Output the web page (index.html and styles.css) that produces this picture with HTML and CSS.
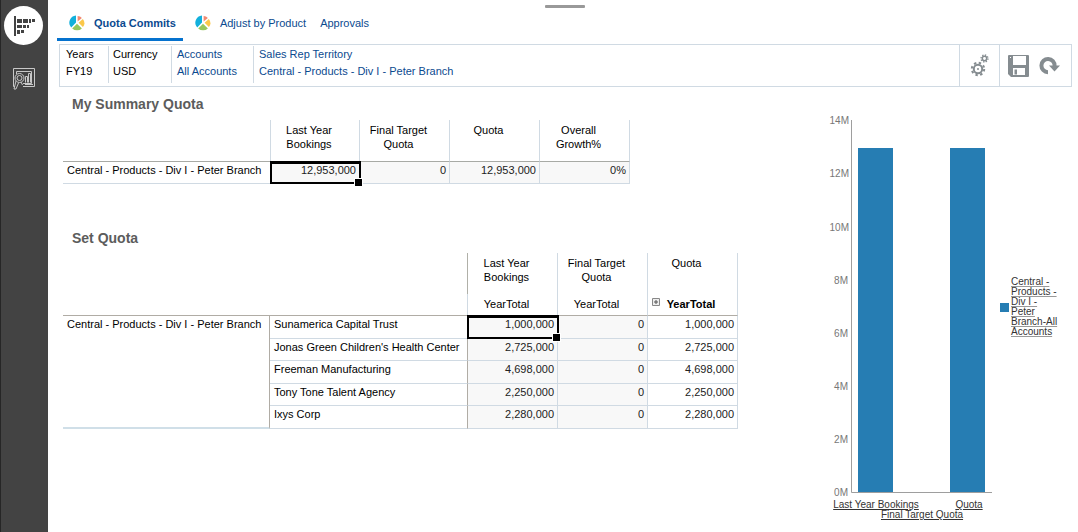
FILE: index.html
```html
<!DOCTYPE html>
<html lang="en">
<head>
<meta charset="utf-8">
<title>Quota Commits</title>
<link rel="stylesheet" href="styles.css">
</head>
<body>
<svg class="defs" width="0" height="0" aria-hidden="true">
  <symbol id="pie" viewBox="0 0 16 16">
    <path d="M7 7.600V.6A7.200 7.200 0 0 0 2.200 12.600z" fill="#12b0dc"/>
    <path d="M8.600 6.600V1a6.500 6.500 0 0 1 4.300 2z" fill="#f28a72"/>
    <path d="M9.600 7.800l4.200-3.700a6.400 6.400 0 0 1 .100 8z" fill="#fbc84a"/>
    <path d="M8 8.800l4.900 4.600a7 7 0 0 1-9.700 0z" fill="#97c75c"/>
  </symbol>
</svg>
<nav class="sidebar" aria-label="Cards">
  <button class="side-button side-active" aria-label="Quota">
    <svg width="24" height="22" viewBox="0 0 24 22" fill="#434343"><path d="M2 1h2v20H2zM5 4h5v4H5zM11 4h5v4h-5zM17 4h2v4h-2zM20 4h3v3h-3zM5 10h5v3H5zM11 10h3v3h-3zM15 10h2v3h-2zM5 15h3v4H5zM9 15h3v3H9z"/></svg>
  </button>
  <button class="side-button" aria-label="Analysis">
    <svg width="24" height="24" viewBox="0 0 24 24" fill="none" stroke="#c8c8c8"><path d="M1.500 20.500v-18h21v18H11M1.500 20.500H3M4.500 8V5.500h15v12H11M15.500 16.500v-6h-2v6M18.500 16.500v-9h-2v9M13 18.500h8"/><circle cx="7.500" cy="12" r="4.500"/><circle cx="7.500" cy="12" r="2.500"/><path d="M4 15l-2 8h2l2.500-6M9 16l1.500 3"/></svg>
  </button>
</nav>
<main class="main">
  <div class="grip"></div>
  <nav class="tabs">
    <a class="tab tab-active" href="#commits"><svg width="16" height="16"><use href="#pie"/></svg>Quota Commits</a>
    <a class="tab" href="#adjust"><svg width="16" height="16"><use href="#pie"/></svg>Adjust by Product</a>
    <a class="tab" href="#approvals">Approvals</a>
  </nav>
  <section class="pov">
    <div class="dim dim-years"><span>Years</span><span>FY19</span></div>
    <div class="dim dim-currency"><span>Currency</span><span>USD</span></div>
    <div class="dim dim-accounts"><a href="#accounts">Accounts</a><a href="#accounts">All Accounts</a></div>
    <div class="dim dim-territory"><a href="#territory">Sales Rep Territory</a><a href="#territory">Central - Products - Div I - Peter Branch</a></div>
    <div class="tools tools-settings">
      <button class="tool" aria-label="Settings">
        <svg width="20" height="24" viewBox="0 0 20 24" fill="none" stroke="#858c90"><circle cx="8" cy="15" r="4.200" stroke-width="2"/><circle cx="8" cy="15" r="6.200" stroke-width="2" stroke-dasharray="2.400 2.470"/><circle cx="8" cy="15" r="1" fill="#858c90" stroke="none"/><circle cx="14.500" cy="4.500" r="2.200" stroke-width="1.500"/><circle cx="14.500" cy="4.500" r="3.500" stroke-width="1.300" stroke-dasharray="1.370 1.370"/></svg>
      </button>
    </div>
    <div class="tools tools-save">
      <button class="tool" aria-label="Save">
        <svg width="21" height="22" viewBox="0 0 21 22"><path d="M1 0h19a1 1 0 0 1 1 1v20a1 1 0 0 1-1 1H3l-3-3V1a1 1 0 0 1 1-1z" fill="#858c90"/><path d="M5 1h13v9H5zM5 13h12v7H5z" fill="#fff"/><path d="M6.500 14.500h2.500v5H6.500z" fill="#858c90"/><path d="M2 2h1v1H2z" fill="#fff"/></svg>
      </button>
      <button class="tool" aria-label="Refresh">
        <svg width="21" height="20" viewBox="0 0 21 20"><path d="M9 16.200A6.600 6.600 0 1 1 15.600 10" fill="none" stroke="#858c90" stroke-width="4"/><path d="M10 9.500h11l-5.500 6z" fill="#858c90"/></svg>
      </button>
    </div>
  </section>
  <div class="content">
    <div class="grids">
      <h2 class="title">My Summary Quota</h2>
      <table class="grid summary">
        <colgroup><col class="col-name"><col class="col-first"><col class="col-num"><col class="col-num"><col class="col-num"></colgroup>
        <thead>
          <tr><td class="corner"></td><th scope="col">Last Year<br>Bookings</th><th scope="col">Final Target<br>Quota</th><th scope="col">Quota</th><th scope="col">Overall<br>Growth%</th></tr>
        </thead>
        <tbody>
          <tr><th scope="row">Central - Products - Div I - Peter Branch</th><td class="locked selected">12,953,000</td><td class="locked">0</td><td class="locked">12,953,000</td><td class="locked">0%</td></tr>
        </tbody>
      </table>
      <h2 class="title">Set Quota</h2>
      <table class="grid quota">
        <colgroup><col class="col-branch"><col class="col-account"><col class="col-num"><col class="col-num"><col class="col-num"></colgroup>
        <thead>
          <tr><td class="corner" colspan="2"></td><th scope="col">Last Year<br>Bookings</th><th scope="col">Final Target<br>Quota</th><th scope="col">Quota</th></tr>
          <tr class="periods"><td class="corner" colspan="2"></td><th scope="col">YearTotal</th><th scope="col">YearTotal</th><th scope="col" class="expandable"><button class="expand" aria-label="Expand YearTotal"><svg width="8" height="8" viewBox="0 0 8 8"><path d="M.5.5h7v7h-7z" fill="#eee" stroke="#888"/><path d="M2 4h4M4 2v4" stroke="#555"/></svg></button>YearTotal</th></tr>
        </thead>
        <tbody>
          <tr><th scope="rowgroup" rowspan="5" class="branch">Central - Products - Div I - Peter Branch</th><th scope="row" class="account">Sunamerica Capital Trust</th><td class="locked selected">1,000,000</td><td class="locked">0</td><td>1,000,000</td></tr>
          <tr><th scope="row" class="account">Jonas Green Children's Health Center</th><td class="locked">2,725,000</td><td class="locked">0</td><td>2,725,000</td></tr>
          <tr><th scope="row" class="account">Freeman Manufacturing</th><td class="locked">4,698,000</td><td class="locked">0</td><td>4,698,000</td></tr>
          <tr><th scope="row" class="account">Tony Tone Talent Agency</th><td class="locked">2,250,000</td><td class="locked">0</td><td>2,250,000</td></tr>
          <tr><th scope="row" class="account">Ixys Corp</th><td class="locked">2,280,000</td><td class="locked">0</td><td>2,280,000</td></tr>
        </tbody>
      </table>
    </div>
    <div class="chart">
      <svg class="plot" width="165" height="412" viewBox="0 0 165 412">
        <g class="axis-label" text-anchor="end">
          <text x="22" y="16">14M</text><text x="22" y="69">12M</text><text x="22" y="123">10M</text><text x="21" y="176">8M</text><text x="21" y="229">6M</text><text x="21" y="282">4M</text><text x="21" y="335">2M</text><text x="21" y="388">0M</text>
        </g>
        <path d="M31 40h35v344H31zM123 40h35v344h-35z" fill="#267db3"/>
        <path d="M24.500 12v372.500H165" fill="none" stroke="#9e9e9e"/>
        <g class="chart-link" text-anchor="middle">
          <a href="#last-year"><text x="49" y="400">Last Year Bookings</text></a>
          <a href="#quota"><text x="142" y="400">Quota</text></a>
          <a href="#target"><text x="95" y="410">Final Target Quota</text></a>
        </g>
      </svg>
      <a class="legend" href="#series"><span class="swatch"></span><span class="legend-text">Central -<br>Products -<br>Div I -<br>Peter<br>Branch-All<br>Accounts</span></a>
    </div>
  </div>
</main>
</body>
</html>
```

FILE: styles.css
```css
* { box-sizing: border-box; }
body {
  margin: 0;
  min-height: 100vh;
  display: flex;
  background: #fff;
  color: #000;
  font: 11px/17px "Liberation Sans", Arial, sans-serif;
}
a { color: #0b4a8f; text-decoration: none; }
button { padding: 0; border: 0; background: none; display: flex; align-items: center; justify-content: center; }
.defs { position: absolute; }

.sidebar {
  width: 48px;
  flex: none;
  padding: 6px 0 0 3px;
  background: #434343;
  border-left: 1px solid #262626;
  display: flex;
  flex-direction: column;
  gap: 13px;
}
.side-button { width: 39px; height: 39px; border-radius: 50%; }
.side-active { background: #fff; }

.main { flex: 1; min-width: 0; display: flex; flex-direction: column; padding: 5px 6px 0 9px; }
.grip { width: 40px; height: 3px; border-radius: 1px; background: #999; align-self: center; }

.tabs { display: flex; gap: 4px; height: 33px; }
.tab {
  display: flex;
  align-items: center;
  gap: 9px;
  padding: 0 4px 0 8px;
  border-bottom: 3px solid transparent;
}
.tab:first-child { padding: 0 7px 0 12px; }
.tab:last-child { padding: 0 6px; }
.tab-active { font-weight: bold; border-color: #0572ce; }

.pov { margin: 3px 0 0 2px; display: flex; border: 1px solid #d0dae3; height: 43px; }
.dim {
  display: flex;
  flex-direction: column;
  margin: 1px 0 3px;
  padding: 0 0 0 5px;
  border-right: 1px solid #d0dae3;
}
.dim-years { width: 49px; padding-left: 6px; }
.dim-currency { width: 63px; padding-left: 4px; }
.dim-accounts { width: 82px; }
.dim-territory { flex: 1; border: 0; }
.tools { display: flex; align-items: center; border-left: 1px solid #d0dae3; }
.tools-settings { width: 40px; justify-content: center; }
.tools-save { width: 72px; padding-left: 8px; gap: 10px; }

.content { display: flex; justify-content: space-between; padding-left: 6px; }
.title { margin: 0 0 0 9px; padding: 8px 0 7px; color: #5c5c5c; font-size: 14px; line-height: 18px; font-weight: bold; }
.grid { table-layout: fixed; border-collapse: separate; border-spacing: 0; line-height: 14px; }
.summary { width: 567px; margin-bottom: 37px; }
.quota { width: 675px; }
.title + .quota { margin-top: -1px; }
.col-name { width: 208px; }
.col-first { width: 89px; }
.col-branch { width: 207px; }
.col-account { width: 198px; }
.col-num { width: 90px; }

.grid th, .grid td { padding: 1px 4px; vertical-align: top; border-right: 1px solid #d0dae3; border-bottom: 1px solid #d0dae3; font-weight: normal; }
.grid tbody th { text-align: left; }
.grid tbody td { text-align: right; padding-right: 3px; color: #222; }
.grid tbody tr { height: 22px; }
.grid .locked { background: #f8f8f8; }
.grid thead th { padding: 3px 12px 0 0; text-align: center; }
.grid thead .corner { border-right-color: #b0b0a8; }
.summary thead tr { height: 42px; }
.summary thead th, .summary thead .corner { border-bottom-color: #a8aaa5; }
.summary thead .corner { border-right-color: #d0dae3; }
.summary tbody th { border-right-color: #a8aaa5; }
.quota thead tr { height: 41px; }
.quota thead tr th, .quota thead .corner { border-bottom: 0; }
.quota thead .periods { height: 22px; }
.quota .periods .corner { border-right-color: #d0dae3; }
.quota .periods th, .quota .periods .corner { border-bottom: 1px solid #b0aca5; }
.quota thead .expandable { font-weight: bold; padding-right: 18px; }
.expand { display: inline-flex; vertical-align: 2px; margin-right: 7px; }
.quota tbody tr:nth-child(odd) { height: 23px; }
.grid .branch, .grid .account { border-right-color: #b0aca5; }
.grid .branch { border-bottom: 2px solid #d0dfe8; }

.selected { position: relative; }
.selected::before { content: ""; position: absolute; inset: -1px -2px -1px -1px; border: 2px solid #000; border-top-width: 3px; }
.selected::after { content: ""; position: absolute; right: -4px; bottom: -4px; width: 7px; height: 7px; background: #000; border: 1px solid #fff; z-index: 1; }

.chart { display: flex; align-items: center; padding: 21px 9px 0 0; gap: 2px; }
.plot { flex: none; margin-right: 6px; overflow: visible; }
.axis-label { font-size: 10px; fill: #777; }
.chart-link { font-size: 10px; }
.chart-link text { fill: #333; text-decoration: underline; text-decoration-color: #999; }
.legend { display: flex; align-items: center; gap: 2px; color: #333; font-size: 10px; line-height: 10px; padding-bottom: 14px; }
.swatch { width: 9px; height: 9px; background: #267db3; }
.legend-text { text-decoration: underline; text-decoration-color: #999; width: 52px; }
```
